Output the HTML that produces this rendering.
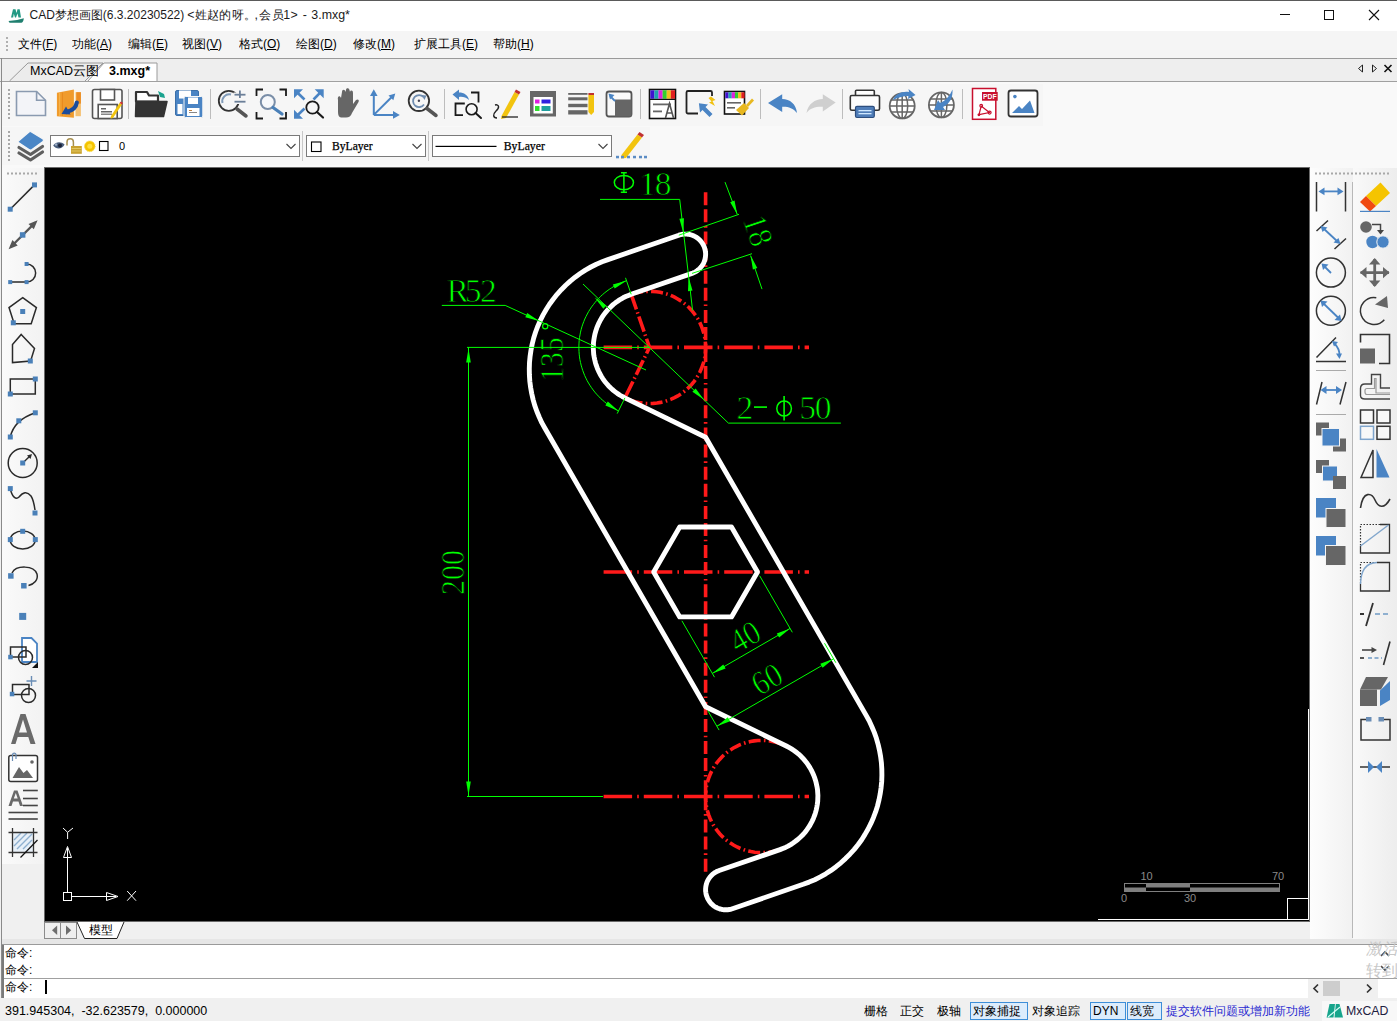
<!DOCTYPE html><html><head><meta charset="utf-8"><style>
*{margin:0;padding:0;box-sizing:border-box}
html,body{width:1397px;height:1021px;overflow:hidden;background:#f0f0f0;font-family:"Liberation Sans",sans-serif;position:relative}
.a{position:absolute}
.t{position:absolute;white-space:nowrap;font-size:12px;color:#000;line-height:14px}
.c{display:inline-block;width:1em;text-align:center;overflow:hidden;vertical-align:top}
</style></head><body>
<div class="a" style="left:0;top:0;width:1397px;height:1px;background:#5a5a5a"></div>
<div class="a" style="left:0;top:1px;width:1397px;height:30px;background:#ffffff"></div>
<div class="t" style="left:29.5px;top:8px;font-size:12px;color:#1a1a1a">CAD<span class="c">梦</span><span class="c">想</span><span class="c">画</span><span class="c">图</span>(6.3.20230522)</div>
<div class="t" style="left:187.2px;top:8px;font-size:12.4px;color:#1a1a1a">&lt;</div>
<div class="t" style="left:194.5px;top:8px;font-size:12.4px;color:#1a1a1a"><span class="c">姓</span><span class="c">赵</span><span class="c">的</span><span class="c">呀</span><span class="c">。</span></div>
<div class="t" style="left:254.5px;top:8px;font-size:12.4px;color:#1a1a1a">,</div>
<div class="t" style="left:259px;top:8px;font-size:12.4px;color:#1a1a1a"><span class="c">会</span><span class="c">员</span></div>
<div class="t" style="left:283.2px;top:8px;font-size:12.4px;color:#1a1a1a">1</div>
<div class="t" style="left:290.5px;top:8px;font-size:12.4px;color:#1a1a1a">&gt;</div>
<div class="t" style="left:302.8px;top:8px;font-size:12.4px;color:#1a1a1a">-</div>
<div class="t" style="left:311.3px;top:8px;font-size:12.4px;color:#1a1a1a">3.mxg*</div>
<div class="a" style="left:0;top:31px;width:1397px;height:27px;background:#f5f5f5"></div>
<div class="t" style="left:18px;top:37px;font-size:12px"><span class="c">文</span><span class="c">件</span>(<u style="text-underline-offset:1px">F</u>)</div>
<div class="t" style="left:72px;top:37px;font-size:12px"><span class="c">功</span><span class="c">能</span>(<u style="text-underline-offset:1px">A</u>)</div>
<div class="t" style="left:128px;top:37px;font-size:12px"><span class="c">编</span><span class="c">辑</span>(<u style="text-underline-offset:1px">E</u>)</div>
<div class="t" style="left:182px;top:37px;font-size:12px"><span class="c">视</span><span class="c">图</span>(<u style="text-underline-offset:1px">V</u>)</div>
<div class="t" style="left:239px;top:37px;font-size:12px"><span class="c">格</span><span class="c">式</span>(<u style="text-underline-offset:1px">O</u>)</div>
<div class="t" style="left:296px;top:37px;font-size:12px"><span class="c">绘</span><span class="c">图</span>(<u style="text-underline-offset:1px">D</u>)</div>
<div class="t" style="left:353px;top:37px;font-size:12px"><span class="c">修</span><span class="c">改</span>(<u style="text-underline-offset:1px">M</u>)</div>
<div class="t" style="left:414px;top:37px;font-size:12px"><span class="c">扩</span><span class="c">展</span><span class="c">工</span><span class="c">具</span>(<u style="text-underline-offset:1px">E</u>)</div>
<div class="t" style="left:493px;top:37px;font-size:12px"><span class="c">帮</span><span class="c">助</span>(<u style="text-underline-offset:1px">H</u>)</div>
<div class="a" style="left:0;top:58px;width:1397px;height:1px;background:#9a9a9a"></div>
<div class="a" style="left:0;top:59px;width:1397px;height:22px;background:#eeeeee"></div>
<div class="a" style="left:0;top:81px;width:1397px;height:1px;background:#a0a0a0"></div>
<div class="a" style="left:2px;top:82px;width:1395px;height:86px;background:#f9f9f9"></div>
<div class="a" style="left:2px;top:84px;width:1041px;height:42px;background:#f6f6f6"></div>
<div class="a" style="left:2px;top:127px;width:648px;height:38px;background:#f6f6f6"></div>
<div class="a" style="left:1px;top:58px;width:1px;height:940px;background:#8a8a8a"></div>
<div class="a" style="left:44px;top:167px;width:1266px;height:755px;background:#000;border:1px solid #6a6a6a"></div>
<div class="a" style="left:2px;top:168px;width:42px;height:696px;background:linear-gradient(to right,#fafafa,#f2f2f2)"></div>
<div class="a" style="left:1310px;top:168px;width:43px;height:772px;background:linear-gradient(to right,#fdfdfd,#f1f1f1)"></div>
<div class="a" style="left:1353px;top:168px;width:44px;height:772px;background:linear-gradient(to right,#f9f9f9,#ededed)"></div>
<div class="a" style="left:2px;top:922px;width:1308px;height:17px;background:#f0f0f0"></div>
<div class="a" style="left:44px;top:922px;width:17px;height:17px;border:1px solid #8c8c8c;background:#efefef"></div>
<div class="a" style="left:60px;top:922px;width:17px;height:17px;border:1px solid #8c8c8c;background:#efefef"></div>
<div class="a" style="left:2px;top:939px;width:1395px;height:6px;background:#e6e6e6"></div>
<div class="a" style="left:2px;top:944px;width:1395px;height:1px;background:#9a9a9a"></div>
<div class="a" style="left:2px;top:945px;width:1395px;height:53px;background:#ffffff;border-left:2px solid #7a7a7a"></div>
<div class="a" style="left:4px;top:978px;width:1393px;height:1px;background:#a0a0a0"></div>
<div class="t" style="left:5px;top:946px;font-size:12px"><span class="c">命</span><span class="c">令</span>:</div>
<div class="t" style="left:5px;top:963px;font-size:12px"><span class="c">命</span><span class="c">令</span>:</div>
<div class="t" style="left:5px;top:980px;font-size:12px"><span class="c">命</span><span class="c">令</span>:</div>
<div class="a" style="left:45px;top:980px;width:2px;height:14px;background:#000"></div>
<div class="a" style="left:0;top:998px;width:1397px;height:23px;background:#f0f0f0"></div>
<div class="t" style="left:5px;top:1004px;font-size:12.5px">391.945304,&nbsp;&nbsp;-32.623579,&nbsp;&nbsp;0.000000</div>
<svg width="1397" height="1021" style="position:absolute;left:0;top:0"><rect x="8" y="89" width="2" height="2" fill="#a8a8a8"/><rect x="8" y="93" width="2" height="2" fill="#a8a8a8"/><rect x="8" y="97" width="2" height="2" fill="#a8a8a8"/><rect x="8" y="101" width="2" height="2" fill="#a8a8a8"/><rect x="8" y="105" width="2" height="2" fill="#a8a8a8"/><rect x="8" y="109" width="2" height="2" fill="#a8a8a8"/><rect x="8" y="113" width="2" height="2" fill="#a8a8a8"/><rect x="8" y="117" width="2" height="2" fill="#a8a8a8"/><rect x="128.0" y="89" width="1" height="30" fill="#bdbdbd"/><rect x="210.0" y="89" width="1" height="30" fill="#bdbdbd"/><rect x="444.0" y="89" width="1" height="30" fill="#bdbdbd"/><rect x="640.0" y="89" width="1" height="30" fill="#bdbdbd"/><rect x="760.0" y="89" width="1" height="30" fill="#bdbdbd"/><rect x="842.0" y="89" width="1" height="30" fill="#bdbdbd"/><rect x="962.0" y="89" width="1" height="30" fill="#bdbdbd"/><path d="M16.5,91.5 H36.6 L45.5,100.3 V115.5 H16.5 Z" fill="#f3f4f8" stroke="#8a9ab0" stroke-width="1.6"/><path d="M36.6,91.5 V100.3 H45.5" fill="none" stroke="#8a9ab0" stroke-width="1.6"/><polygon points="56.9,92.7 73.9,89.4 73.9,117.7 56.9,116.3" fill="#f09b2c"/><rect x="59" y="93" width="1.2" height="23" fill="#f6b24a"/><rect x="62" y="92.5" width="1" height="23.5" fill="#e88a1e"/><rect x="75.3" y="92.2" width="5.6" height="24" fill="#f5c070"/><rect x="76.3" y="92.2" width="4.6" height="11.4" fill="#ec8c22"/><rect x="74" y="90" width="1.3" height="27.5" fill="#fff3dc"/><path d="M76.8,102.5 C76,108 71,111 66.5,112" fill="none" stroke="#1b4c9c" stroke-width="4.2" stroke-linecap="round"/><polygon points="61.5,114 66,106.5 70.5,114.5" fill="#1b4c9c"/><rect x="92.5" y="89.5" width="29.5" height="29" rx="2" fill="#fbfbfb" stroke="#555" stroke-width="1.6"/><rect x="100.5" y="89.5" width="14" height="10.5" fill="#fff" stroke="#555" stroke-width="1.6"/><rect x="98.2" y="104.5" width="19" height="14" fill="#fff" stroke="#555" stroke-width="1.6"/><rect x="101" y="108" width="5" height="1.5" fill="#666"/><rect x="101" y="111" width="11" height="1.5" fill="#666"/><rect x="101" y="113.5" width="11" height="1.5" fill="#888"/><path d="M119.5,103 L122,104.5 L113,118 L110.5,118.5 L111,116 Z" fill="#f2c40f"/><path d="M119.5,103 L121,101.5 L123,103 L122,104.5 Z" fill="#d03030"/><path d="M136,92 H147 L149,95.5 H158 V101.5 H136 Z" fill="#fff" stroke="#333" stroke-width="2.2" stroke-linejoin="round"/><path d="M136,101.5 H167 L163.5,116.5 H135.5 Z" fill="#333" stroke="#333" stroke-width="1.5" stroke-linejoin="round"/><path d="M158,91 L164,94 L165,98 L160,97 Z" fill="#1aa38f"/><rect x="175.5" y="90.5" width="23" height="25" rx="1.5" fill="#4a84c4" stroke="#3a6ea8" stroke-width="1"/><rect x="179" y="90.5" width="12" height="8" fill="#fff"/><rect x="177.5" y="104" width="5" height="10" fill="#fff"/><rect x="184" y="96.5" width="18.8" height="21" rx="1.5" fill="#4a84c4" stroke="#f6f6f6" stroke-width="1"/><rect x="188" y="97.5" width="10" height="6.5" fill="#fff"/><rect x="187" y="108" width="12.5" height="8" fill="#fff"/><rect x="189" y="110" width="3" height="1" fill="#c08040"/><rect x="189" y="112" width="8" height="1" fill="#888"/><circle cx="228.8" cy="100.8" r="10" fill="none" stroke="#333" stroke-width="1.8"/><path d="M222.5,103 A7,7 0 0 1 231,94.5" fill="none" stroke="#7f9ab8" stroke-width="2"/><rect x="233.5" y="92.5" width="13" height="11.5" fill="#f6f6f6"/><rect x="234.5" y="93.8" width="11" height="1.8" fill="#6b7f98"/><rect x="234.5" y="100.8" width="11" height="1.8" fill="#6b7f98"/><rect x="239" y="90.5" width="1.8" height="7.5" fill="#6b7f98"/><line x1="237" y1="109" x2="246" y2="116" stroke="#555" stroke-width="3.5" stroke-linecap="round"/><path d="M256.5,96 V89.5 H263 M279.5,89.5 H286 V96 M286,112 V118.5 H279.5 M263,118.5 H256.5 V112" fill="none" stroke="#1a1a1a" stroke-width="1.8"/><circle cx="267.8" cy="102" r="7" fill="#f6f8fb" stroke="#7a8ea8" stroke-width="2"/><line x1="273" y1="107.5" x2="282" y2="114" stroke="#4a80b8" stroke-width="3.2" stroke-linecap="round"/><polygon points="294,89.2 303,89.2 294,98.2" fill="#4a84c4"/><line x1="297" y1="92.2" x2="304.5" y2="99.5" stroke="#4a84c4" stroke-width="2.6"/><polygon points="323.7,89.2 314.7,89.2 323.7,98.2" fill="#4a84c4"/><line x1="320.7" y1="92.2" x2="313.5" y2="99.5" stroke="#4a84c4" stroke-width="2.6"/><polygon points="294,118.8 303,118.8 294,109.8" fill="#4a84c4"/><line x1="297" y1="115.8" x2="304.5" y2="108.5" stroke="#4a84c4" stroke-width="2.6"/><circle cx="312.5" cy="107.5" r="6.2" fill="none" stroke="#1a1a1a" stroke-width="1.8"/><line x1="317" y1="112" x2="323" y2="117.5" stroke="#1a1a1a" stroke-width="2.2" stroke-linecap="round"/><path d="M338,100 C337,96 340,95 341,98 L342,92 C342,89 345,89 345.5,92 L346,90 C346,87.5 349,87.5 349.5,90 L350,92 C350.5,90 353,90 353,93 L353,104 L356,100 C358,98.5 359.5,100 358.5,102 L352,113 C351,116 349,117.5 346,117.5 L341,117.5 C339,117.5 338,115 338,112 Z" fill="#666"/><path d="M373.8,114.9 V94 M373.8,114.9 H395 M373.8,114.9 L391.5,97.2" fill="none" stroke="#4a84c4" stroke-width="2"/><polygon points="373.8,89.2 370,96 377.6,96" fill="#4a84c4"/><polygon points="399.8,114.9 393,111 393,118.8" fill="#4a84c4"/><polygon points="395.3,93.5 388.5,95.5 393.3,100.3" fill="#4a84c4"/><circle cx="418.9" cy="100.8" r="10.2" fill="none" stroke="#333" stroke-width="1.8"/><path d="M423.5,97 A6,6 0 1 0 424,104.5" fill="none" stroke="#6f8db0" stroke-width="1.8"/><polygon points="421.5,95 426.5,95.5 424.5,100" fill="#6f8db0"/><circle cx="418.9" cy="100.8" r="1.2" fill="#445"/><line x1="427" y1="108.5" x2="436" y2="115.5" stroke="#555" stroke-width="3.5" stroke-linecap="round"/><path d="M452.5,94.5 L459,89.5 V92.5 C464,92.5 468,95 469,100 C466,97 462,96.5 459,97 V100 Z" fill="#4a84c4"/><path d="M471,92.5 H478.5 V102.5 M464.8,103.5 H455.5 V115.2 H463" fill="none" stroke="#1a1a1a" stroke-width="1.8"/><circle cx="471.6" cy="109.3" r="5.5" fill="none" stroke="#1a1a1a" stroke-width="1.6"/><line x1="475.5" y1="113" x2="481" y2="118" stroke="#1a1a1a" stroke-width="2" stroke-linecap="round"/><path d="M501.5,116 L514.5,92 L519,94.5 L506,118 L501,119 Z" fill="#f2c40f"/><path d="M514.5,92 L516,89.5 L520.5,92 L519,94.5 Z" fill="#c03030"/><path d="M495,105 C499,104 500,107.5 496,111 C493,114 492.5,118 497,118" fill="none" stroke="#222" stroke-width="1.4"/><line x1="502" y1="117" x2="518" y2="117" stroke="#333" stroke-width="1.4"/><rect x="530" y="91" width="26" height="25.5" fill="#676767"/><rect x="533.5" y="97" width="19.3" height="16.5" fill="#fff"/><rect x="535" y="99.5" width="4.5" height="4" fill="#e020e0"/><rect x="541.5" y="99.5" width="9" height="4" fill="#3020e0"/><rect x="535" y="106" width="4.5" height="5" fill="#30e030"/><rect x="541.5" y="106" width="9" height="5" fill="#20a0a0"/><rect x="568.2" y="93" width="19.3" height="1.8" fill="#666"/><rect x="568.2" y="97.3" width="19.3" height="3" fill="#666"/><rect x="568.2" y="103.8" width="19.3" height="3.4" fill="#666"/><rect x="568.2" y="110.2" width="19.3" height="4.3" fill="#666"/><path d="M588.4,95 H594 V112 L591.2,115 L588.4,112 Z" fill="#f2c40f"/><rect x="588.4" y="93" width="5.6" height="2" fill="#c03030"/><rect x="606.5" y="91.5" width="25" height="25" rx="2.5" fill="#fafafa" stroke="#555" stroke-width="1.8"/><rect x="615" y="99.5" width="16.5" height="17" fill="#666"/><line x1="615" y1="101" x2="610" y2="96" stroke="#4a84c4" stroke-width="1.8"/><polygon points="608.5,93.5 614.5,95 610,99.5" fill="#4a84c4"/><rect x="649.5" y="89.5" width="26" height="29" fill="#fff" stroke="#111" stroke-width="1.6"/><rect x="650.3" y="90.3" width="4.2" height="8.5" fill="#4010d0"/><rect x="654.4" y="90.3" width="4.2" height="8.5" fill="#20a0b0"/><rect x="658.5" y="90.3" width="4.2" height="8.5" fill="#e020e0"/><rect x="662.6" y="90.3" width="4.2" height="8.5" fill="#30d030"/><rect x="666.7" y="90.3" width="4.2" height="8.5" fill="#f0c020"/><rect x="670.8" y="90.3" width="4.2" height="8.5" fill="#e02020"/><rect x="650" y="98.8" width="25" height="1.2" fill="#111"/><rect x="653" y="103.5" width="18" height="1.8" fill="#666"/><rect x="653" y="110.5" width="9" height="1.8" fill="#666"/><path d="M665.5,118 L669.5,103.5 L673.5,118 M667,113 H672" fill="none" stroke="#555" stroke-width="1.6"/><path d="M698,113.5 H688 A1.5,1.5 0 0 1 686.5,112 V92.5 A1.5,1.5 0 0 1 688,91 H710.5 A1.5,1.5 0 0 1 712,92.5 V96" fill="none" stroke="#222" stroke-width="1.8"/><polygon points="698.9,103.3 708,104.5 705.5,107 712.5,114 709.5,117 702.5,110 700,112.5" fill="#4a84c4"/><polygon points="711,96.5 715.5,100 712.5,101 715,106 709,102.5 711.5,101.5 708.5,98" fill="#f0c010"/><rect x="724.5" y="91.5" width="20" height="22.5" fill="#fff" stroke="#111" stroke-width="1.6"/><rect x="725.3" y="92.3" width="3.3" height="6" fill="#4010d0"/><rect x="728.5" y="92.3" width="3.3" height="6" fill="#20a0b0"/><rect x="731.7" y="92.3" width="3.3" height="6" fill="#e020e0"/><rect x="734.9" y="92.3" width="3.3" height="6" fill="#30d030"/><rect x="738.1" y="92.3" width="3.3" height="6" fill="#f0c020"/><rect x="741.3" y="92.3" width="3.3" height="6" fill="#e02020"/><rect x="727" y="102" width="14" height="1.6" fill="#666"/><rect x="727" y="107" width="8" height="1.6" fill="#666"/><path d="M736,110 L744,103 L749,108 L742,115.5 Z" fill="#e8b820"/><path d="M746,105 L752,98.5 L754,100.5 L748,107 Z" fill="#e8b820"/><path d="M768,102.9 L782.2,94.3 V99 C790,99 796,104 797,113 C793,108 788,106.5 782.2,106.8 V112 Z" fill="#4a84c4"/><path d="M835.7,102.5 L822.8,94.3 V99 C815,99 808,104 806.5,113 C810,108 816,106.5 822.8,106.8 V111.5 Z" fill="#cfcfcf"/><rect x="855.5" y="90.2" width="18.8" height="6" rx="1" fill="#fff" stroke="#333" stroke-width="1.6"/><rect x="850.3" y="95.5" width="29.2" height="14.7" rx="1.5" fill="#fdfdfd" stroke="#333" stroke-width="1.6"/><rect x="855.5" y="106.3" width="18.8" height="11.2" rx="1.5" fill="#4f7db8" stroke="#2d4e7e" stroke-width="1.2"/><rect x="858.5" y="110" width="13" height="1.3" fill="#cfe8ff"/><rect x="858.5" y="113" width="13" height="1.3" fill="#cfe8ff"/><circle cx="902.2" cy="105.9" r="12.5" fill="#fff" stroke="#666" stroke-width="1.8"/><ellipse cx="902.2" cy="105.9" rx="5.5" ry="12.5" fill="none" stroke="#666" stroke-width="1.5"/><path d="M902.2,93.4 V118.4 M889.7,105.9 H914.7 M891.2,99.9 H913.2 M891.2,111.9 H913.2" fill="none" stroke="#666" stroke-width="1.5"/><circle cx="941.4" cy="104.9" r="12.5" fill="#fff" stroke="#666" stroke-width="1.8"/><ellipse cx="941.4" cy="104.9" rx="5.5" ry="12.5" fill="none" stroke="#666" stroke-width="1.5"/><path d="M941.4,92.4 V117.4 M928.9,104.9 H953.9 M930.4,98.9 H952.4 M930.4,110.9 H952.4" fill="none" stroke="#666" stroke-width="1.5"/><path d="M893,100 C895,94 902,91 909,92 L908.5,89 L915.5,95 L908,99 L908.5,96 C903,96 897,98 893,100 Z" fill="#4a84c4"/><path d="M952.5,89.5 C953,97 950,104 943,107 L945,110 L934,110 L938,100 L940,103 C946,101 950,95 952.5,89.5 Z" fill="#4a84c4"/><rect x="972.5" y="88.5" width="23.3" height="30.8" fill="#fff" stroke="#c8102e" stroke-width="1.5"/><rect x="982" y="92" width="15.7" height="8.7" fill="#c8102e"/><text x="989.8" y="99.2" font-family="Liberation Sans" font-weight="bold" font-size="7.5" fill="#fff" text-anchor="middle" textLength="13.5" lengthAdjust="spacingAndGlyphs">PDF</text><path d="M979,114.7 L981.2,106 L989.4,112.5 Z" fill="none" stroke="#c8102e" stroke-width="1.2"/><circle cx="981.2" cy="105.8" r="1.4" fill="none" stroke="#c8102e" stroke-width="1.1"/><circle cx="978.9" cy="114.8" r="1.4" fill="#c8102e"/><circle cx="989.6" cy="112.6" r="1.5" fill="none" stroke="#c8102e" stroke-width="1.2"/><rect x="1008.5" y="90.5" width="29" height="26" rx="2.5" fill="#fff" stroke="#333" stroke-width="1.8"/><circle cx="1014.9" cy="96.6" r="1.8" fill="#4a84c4"/><polygon points="1012,113 1019,106 1022,109 1030,100.5 1034.5,113" fill="#4a84c4"/><rect x="8" y="131" width="2" height="2" fill="#a8a8a8"/><rect x="8" y="135" width="2" height="2" fill="#a8a8a8"/><rect x="8" y="139" width="2" height="2" fill="#a8a8a8"/><rect x="8" y="143" width="2" height="2" fill="#a8a8a8"/><rect x="8" y="147" width="2" height="2" fill="#a8a8a8"/><rect x="8" y="151" width="2" height="2" fill="#a8a8a8"/><rect x="8" y="155" width="2" height="2" fill="#a8a8a8"/><rect x="8" y="159" width="2" height="2" fill="#a8a8a8"/><polyline points="19,147.5 30.5,154.5 42.5,146.5" fill="none" stroke="#5f5f5f" stroke-width="3.2" stroke-linecap="round" stroke-linejoin="round"/><polyline points="19,153 30.5,160 42.5,152" fill="none" stroke="#5f5f5f" stroke-width="3.2" stroke-linecap="round" stroke-linejoin="round"/><path d="M18.5,141 L29,132 Q30,131 31.5,132 L43,139 Q44,140 43,141.5 L32,149.5 Q30.5,150.5 29,149.5 L18.5,142.5 Q17.5,141.8 18.5,141 Z" fill="#4a86c6" stroke="#f6f6f6" stroke-width="1.2"/><rect x="50.5" y="135.5" width="249" height="21" fill="#fff" stroke="#7a7a7a" stroke-width="1"/><path d="M53.2,145.5 C56,141.5 61,141.5 64.6,144.5 C62,149.5 56,149.5 53.2,145.5 Z" fill="#4a5e7c"/><circle cx="60" cy="145.5" r="2" fill="#1a2238"/><circle cx="56" cy="144.5" r="1.2" fill="#9fb0c8"/><path d="M67,145.5 V142 A3.2,3.2 0 0 1 73.4,142 V146" fill="none" stroke="#a89050" stroke-width="1.5"/><rect x="71" y="146" width="10.8" height="7.8" fill="#c9a230"/><path d="M71.5,148.5 H81.5 M71.5,151 H81.5" stroke="#e8d070" stroke-width="0.8"/><circle cx="89.8" cy="146.3" r="5.3" fill="#f5c400" stroke="#f8d840" stroke-width="1" stroke-dasharray="1.2 0.8"/><circle cx="89.8" cy="146.3" r="2.5" fill="#ffe040"/><rect x="99.5" y="141.5" width="8.5" height="9" fill="#fff" stroke="#000" stroke-width="1.1"/><text x="119" y="150" font-family="Liberation Sans" font-size="11" fill="#000">0</text><path d="M286.5,144 L291,148.5 L295.5,144" fill="none" stroke="#444" stroke-width="1.1"/><rect x="302" y="131" width="1" height="30" fill="#c8c8c8"/><rect x="428" y="131" width="1" height="30" fill="#c8c8c8"/><rect x="306.5" y="135.5" width="119" height="21" fill="#fff" stroke="#7a7a7a" stroke-width="1"/><rect x="311.5" y="142" width="9.5" height="9.5" fill="#fff" stroke="#000" stroke-width="1.1"/><text x="332" y="150" font-family="Liberation Serif" font-size="11.5" stroke="#000" stroke-width="0.25" textLength="40.6" lengthAdjust="spacingAndGlyphs" fill="#000">ByLayer</text><path d="M412.5,144 L417,148.5 L421.5,144" fill="none" stroke="#444" stroke-width="1.1"/><rect x="432.5" y="135.5" width="179" height="21" fill="#fff" stroke="#7a7a7a" stroke-width="1"/><rect x="435.5" y="145.8" width="61" height="1.2" fill="#000"/><text x="503.8" y="150" font-family="Liberation Serif" font-size="11.5" stroke="#000" stroke-width="0.25" textLength="41" lengthAdjust="spacingAndGlyphs" fill="#000">ByLayer</text><path d="M598.5,144 L603,148.5 L607.5,144" fill="none" stroke="#444" stroke-width="1.1"/><path d="M621.5,155 L637.5,134.5 L642,137.5 L626,158 L621,158.5 Z" fill="#f2c40f"/><path d="M637.5,134.5 L639.5,132 L644,135 L642,137.5 Z" fill="#c03030"/><rect x="616" y="155.8" width="3" height="2.5" fill="#5b8cc4"/><rect x="621" y="155.8" width="3" height="2.5" fill="#5b8cc4"/><rect x="627" y="155.8" width="3" height="2.5" fill="#5b8cc4"/><rect x="633" y="155.8" width="3" height="2.5" fill="#5b8cc4"/><rect x="639" y="155.8" width="3" height="2.5" fill="#5b8cc4"/><rect x="644" y="155.8" width="3" height="2.5" fill="#5b8cc4"/><rect x="7" y="172.5" width="2" height="2" fill="#a8a8a8"/><rect x="11" y="172.5" width="2" height="2" fill="#a8a8a8"/><rect x="15" y="172.5" width="2" height="2" fill="#a8a8a8"/><rect x="19" y="172.5" width="2" height="2" fill="#a8a8a8"/><rect x="23" y="172.5" width="2" height="2" fill="#a8a8a8"/><rect x="27" y="172.5" width="2" height="2" fill="#a8a8a8"/><rect x="31" y="172.5" width="2" height="2" fill="#a8a8a8"/><rect x="35" y="172.5" width="2" height="2" fill="#a8a8a8"/><line x1="10.2" y1="209.2" x2="34.5" y2="184.9" stroke="#2a2a2a" stroke-width="1.5"/><rect x="32.0" y="182.4" width="5" height="5" fill="#4a80b8"/><rect x="7.7" y="206.7" width="5" height="5" fill="#4a80b8"/><line x1="11" y1="246.8" x2="35.2" y2="222.6" stroke="#555" stroke-width="2.2"/><polygon points="37.6,220.2 28.5,224 33.8,229.3" fill="#555"/><polygon points="8.6,249.2 17.7,245.4 12.4,240.1" fill="#555"/><rect x="19.9" y="232.2" width="5.5" height="5.5" fill="#4a80b8"/><path d="M10.2,282.1 H26.6 A9,9 0 0 0 26.6,264" fill="none" stroke="#2a2a2a" stroke-width="1.5"/><rect x="8.2" y="280.1" width="4" height="4" fill="#4a80b8"/><rect x="24.6" y="280.1" width="4" height="4" fill="#4a80b8"/><rect x="24.6" y="262.0" width="4" height="4" fill="#4a80b8"/><polygon points="22.7,297.7 36.4,307.6 31.2,323.7 14.2,323.7 9,307.6" fill="none" stroke="#2a2a2a" stroke-width="1.5"/><rect x="20.2" y="309.0" width="5" height="5" fill="#4a80b8"/><rect x="10.8" y="320.3" width="5" height="5" fill="#4a80b8"/><polygon points="21.2,334.4 34.5,348.5 30.6,361 12.5,362.6 12.5,344.6" fill="none" stroke="#2a2a2a" stroke-width="1.5"/><rect x="27.8" y="358.5" width="5" height="5" fill="#4a80b8"/><rect x="10.3" y="379" width="25" height="15" fill="none" stroke="#2a2a2a" stroke-width="1.5"/><rect x="32.8" y="376.5" width="5" height="5" fill="#4a80b8"/><rect x="7.8" y="391.5" width="5" height="5" fill="#4a80b8"/><path d="M10.3,437 Q14,420 35.3,412.8" fill="none" stroke="#2a2a2a" stroke-width="1.5"/><rect x="32.8" y="410.3" width="5" height="5" fill="#4a80b8"/><rect x="16.3" y="418.3" width="5" height="5" fill="#4a80b8"/><rect x="7.8" y="434.5" width="5" height="5" fill="#4a80b8"/><circle cx="22.7" cy="463" r="14.5" fill="none" stroke="#2a2a2a" stroke-width="1.5"/><line x1="22.7" y1="463" x2="30" y2="456" stroke="#2a2a2a" stroke-width="1.4"/><polygon points="32,454 27,455.5 30.5,459" fill="#2a2a2a"/><rect x="20.2" y="460.5" width="5" height="5" fill="#4a80b8"/><path d="M10.3,488.6 C12,497 16,500 19,497 C23,492 27,491 31,496 C33,499 34,503 35,510" fill="none" stroke="#2a2a2a" stroke-width="1.5"/><rect x="7.8" y="486.1" width="5" height="5" fill="#4a80b8"/><rect x="32.5" y="510.5" width="5" height="5" fill="#4a80b8"/><ellipse cx="22.7" cy="540" rx="12.5" ry="9" fill="none" stroke="#2a2a2a" stroke-width="1.5"/><rect x="20.2" y="528.8" width="5" height="5" fill="#4a80b8"/><rect x="7.8" y="537.1" width="5" height="5" fill="#4a80b8"/><rect x="32.8" y="537.1" width="5" height="5" fill="#4a80b8"/><path d="M12,573 C16,565 34,565 37,574 C38.5,580 34,584 28.5,585.5" fill="none" stroke="#2a2a2a" stroke-width="1.5"/><rect x="8.1" y="573.2" width="5.5" height="5.5" fill="#4a80b8"/><rect x="21.1" y="583.0" width="5.5" height="5.5" fill="#4a80b8"/><rect x="19.2" y="612.9" width="7" height="7" fill="#4a80b8"/><path d="M22,638 H31.5 L37,643.5 V662 H22 Z" fill="#fff" stroke="#4a84c4" stroke-width="1.8"/><rect x="10.5" y="647" width="15.5" height="10" fill="none" stroke="#2a2a2a" stroke-width="1.5"/><circle cx="25.5" cy="657.5" r="7" fill="none" stroke="#2a2a2a" stroke-width="1.5"/><rect x="8.2" y="654.8" width="4.5" height="4.5" fill="#4a80b8"/><polygon points="38,662 38,668 32,668" fill="#111"/><rect x="12.5" y="684.5" width="16.5" height="10" fill="none" stroke="#2a2a2a" stroke-width="1.5"/><circle cx="28.5" cy="695.5" r="7" fill="none" stroke="#2a2a2a" stroke-width="1.5"/><rect x="9.8" y="691.8" width="4.5" height="4.5" fill="#4a80b8"/><path d="M31.5,676 V686 M26.5,681 H36.5" stroke="#6a8db5" stroke-width="1.4"/><path d="M11,744 L20.5,714 H25.5 L35.5,744 H30.5 L28.3,737 H17.7 L15.5,744 Z M19,732.5 H27 L23,719.5 Z" fill="#6a6a6a" fill-rule="evenodd"/><rect x="8.8" y="755.5" width="28.7" height="26" rx="2" fill="#fff" stroke="#333" stroke-width="1.5"/><polygon points="12.5,778 19,767 23.5,773 27,770 33,778" fill="#666"/><circle cx="32" cy="762" r="1.8" fill="#666"/><path d="M12.5,761 V754.5 A1.8,1.8 0 0 1 16,754.5 V759" fill="none" stroke="#6a8db5" stroke-width="1.2"/><path d="M8.5,806 L14,790.5 H17.5 L23,806 H20 L18.5,801.5 H13 L11.5,806 Z M13.8,798.5 H17.7 L15.8,793 Z" fill="#6a6a6a" fill-rule="evenodd"/><rect x="23" y="789.7" width="14.799999999999997" height="1.6" fill="#444"/><rect x="23" y="797.7" width="14.799999999999997" height="1.6" fill="#444"/><rect x="23" y="804.7" width="14.799999999999997" height="1.6" fill="#444"/><rect x="8.5" y="811.7" width="29.299999999999997" height="1.6" fill="#444"/><rect x="8.5" y="818.2" width="29.299999999999997" height="1.6" fill="#444"/><rect x="13" y="832.5" width="20" height="20" fill="#e8f0f8"/><path d="M14,840 L21,833 M14,846 L27,833 M17,849 L32,834 M23,849 L32,840" stroke="#8fb0d0" stroke-width="1.4"/><path d="M8.5,832.5 H37.5 M8.5,852.5 H37.5 M12.5,828 V857 M33.5,828 V857" stroke="#333" stroke-width="1.3"/><line x1="20.5" y1="857.5" x2="37.5" y2="840" stroke="#111" stroke-width="1.2"/><rect x="1315" y="172.5" width="2" height="2" fill="#a8a8a8"/><rect x="1319" y="172.5" width="2" height="2" fill="#a8a8a8"/><rect x="1323" y="172.5" width="2" height="2" fill="#a8a8a8"/><rect x="1327" y="172.5" width="2" height="2" fill="#a8a8a8"/><rect x="1331" y="172.5" width="2" height="2" fill="#a8a8a8"/><rect x="1335" y="172.5" width="2" height="2" fill="#a8a8a8"/><rect x="1339" y="172.5" width="2" height="2" fill="#a8a8a8"/><rect x="1343" y="172.5" width="2" height="2" fill="#a8a8a8"/><rect x="1347" y="172.5" width="2" height="2" fill="#a8a8a8"/><rect x="1351" y="172.5" width="2" height="2" fill="#a8a8a8"/><rect x="1355" y="172.5" width="2" height="2" fill="#a8a8a8"/><rect x="1359" y="172.5" width="2" height="2" fill="#a8a8a8"/><rect x="1363" y="172.5" width="2" height="2" fill="#a8a8a8"/><rect x="1367" y="172.5" width="2" height="2" fill="#a8a8a8"/><rect x="1371" y="172.5" width="2" height="2" fill="#a8a8a8"/><rect x="1375" y="172.5" width="2" height="2" fill="#a8a8a8"/><rect x="1379" y="172.5" width="2" height="2" fill="#a8a8a8"/><rect x="1383" y="172.5" width="2" height="2" fill="#a8a8a8"/><rect x="1387" y="172.5" width="2" height="2" fill="#a8a8a8"/><rect x="1352" y="182" width="1" height="756" fill="#b8b8b8"/><path d="M1316.5,182 V211.5 M1345.5,182 V211.5" stroke="#333" stroke-width="1.5"/><line x1="1322" y1="191.4" x2="1340" y2="191.4" stroke="#4a84c4" stroke-width="1.8"/><polygon points="1318.5,191.4 1324.5,187.5 1324.5,195.3" fill="#4a84c4"/><polygon points="1343.5,191.4 1337.5,187.5 1337.5,195.3" fill="#4a84c4"/><path d="M1316.5,231 L1328,220.5 M1334.5,249 L1346,238.5" stroke="#333" stroke-width="1.5"/><line x1="1323" y1="228" x2="1338" y2="242" stroke="#4a84c4" stroke-width="1.8"/><polygon points="1320.5,226 1327.5,227.5 1322.5,232" fill="#4a84c4"/><polygon points="1340.5,244 1333.5,242.5 1338.5,238" fill="#4a84c4"/><circle cx="1330.9" cy="272.6" r="14.5" fill="none" stroke="#333" stroke-width="1.5"/><line x1="1331" y1="273" x2="1324" y2="266" stroke="#4a84c4" stroke-width="1.8"/><polygon points="1321.5,263.5 1328.5,264.5 1323,270" fill="#4a84c4"/><circle cx="1330.9" cy="310.8" r="14.5" fill="none" stroke="#333" stroke-width="1.5"/><line x1="1323" y1="303" x2="1339" y2="318.5" stroke="#4a84c4" stroke-width="1.8"/><polygon points="1320.5,300.5 1327.5,301.5 1322,307" fill="#4a84c4"/><polygon points="1341.5,321 1334.5,320 1340,314.5" fill="#4a84c4"/><path d="M1316.5,357.5 L1336,337.5 M1316,361.5 H1346" stroke="#333" stroke-width="1.5"/><path d="M1334,343 Q1340,349 1339.5,356" fill="none" stroke="#4a84c4" stroke-width="1.8"/><polygon points="1332,341 1338,342 1334,346.5" fill="#4a84c4"/><polygon points="1339.5,359 1336,353.5 1342,353.5" fill="#4a84c4"/><rect x="1316" y="370" width="30" height="1" fill="#aaa"/><rect x="1316" y="414" width="30" height="1" fill="#aaa"/><path d="M1316.5,404.5 L1322,382 M1340,404.5 L1346,382" stroke="#333" stroke-width="1.5"/><line x1="1324" y1="390" x2="1338" y2="390" stroke="#4a84c4" stroke-width="1.8"/><polygon points="1320.5,390 1326.5,386 1326.5,394" fill="#4a84c4"/><polygon points="1342,390 1336,386 1336,394" fill="#4a84c4"/><rect x="1316" y="422.5" width="13" height="13" fill="#666"/><rect x="1333" y="438.5" width="13" height="13" fill="#666"/><rect x="1322" y="428.5" width="17.5" height="17.5" fill="#4a84c4" stroke="#f4f4f4" stroke-width="1"/><rect x="1316" y="460" width="13" height="13" fill="#666"/><rect x="1322.5" y="466" width="15" height="15" fill="#4a84c4" stroke="#f4f4f4" stroke-width="1"/><rect x="1333" y="476" width="13" height="13" fill="#666"/><rect x="1316" y="498" width="20" height="19.5" fill="#4a84c4"/><rect x="1326" y="508.5" width="20" height="19" fill="#666" stroke="#f4f4f4" stroke-width="1"/><rect x="1316" y="498" width="20" height="19.5" fill="#4a84c4" opacity="0"/><rect x="1316" y="536" width="20" height="19.5" fill="#4a84c4"/><rect x="1325.5" y="545.5" width="20.5" height="20" fill="#666" stroke="#f4f4f4" stroke-width="1"/><polygon points="1366,196 1380.5,182.5 1390,193 1376,206" fill="#f5c400"/><polygon points="1360,202 1366,196 1376,206 1370,211.5" fill="#f04a10"/><rect x="1360" y="210.8" width="30" height="1.2" fill="#4a84c4"/><circle cx="1366" cy="227" r="5.8" fill="#666"/><path d="M1372,224.5 H1380.5 V232" fill="none" stroke="#444" stroke-width="1.5"/><polygon points="1377,230 1384,230 1380.5,234.5" fill="#444"/><circle cx="1372.5" cy="242" r="6.2" fill="#4a84c4"/><circle cx="1383" cy="242" r="6.2" fill="#4a84c4" stroke="#f4f4f4" stroke-width="1"/><path d="M1374.7,259 V286 M1360.5,272.6 H1389" stroke="#666" stroke-width="2.8"/><polygon points="1374.7,258 1369,264.5 1380.4,264.5" fill="#666"/><polygon points="1374.7,287 1369,280.5 1380.4,280.5" fill="#666"/><polygon points="1360,272.6 1366.5,267 1366.5,278.2" fill="#666"/><polygon points="1389.5,272.6 1383,267 1383,278.2" fill="#666"/><path d="M1376.3,297.7 A13.5,13.5 0 1 0 1384.3,319.7" fill="none" stroke="#333" stroke-width="1.5"/><polygon points="1375,304.5 1387,296 1388,308" fill="#666"/><path d="M1360.5,342.5 V334.5 H1389.5 V363.5 H1379" fill="none" stroke="#333" stroke-width="1.6"/><rect x="1360" y="348.5" width="15" height="15" fill="#666"/><path d="M1390,388 H1380.5 V374.5 H1371.5 V384 H1365 Q1360.5,384 1360.5,388.5 V395.5 Q1360.5,399 1365,399 H1390" fill="none" stroke="#444" stroke-width="1.4"/><path d="M1390,393 H1376 V378.5 H1374.5 V388.5 H1367 Q1365,388.5 1365,390.5 V392 Q1365,394.5 1367,394.5 H1390" fill="none" stroke="#999" stroke-width="1.2"/><rect x="1360.5" y="410" width="13" height="13" fill="#f8f8f8" stroke="#333" stroke-width="1.5"/><rect x="1377" y="410" width="13" height="13" fill="#f8f8f8" stroke="#333" stroke-width="1.5"/><rect x="1360.5" y="426.3" width="13" height="13" fill="#f8f8f8" stroke="#7fa5cc" stroke-width="1.5"/><rect x="1377" y="426.3" width="13" height="13" fill="#f8f8f8" stroke="#333" stroke-width="1.5"/><polygon points="1373,450 1373,477.5 1361,477.5" fill="none" stroke="#333" stroke-width="1.5"/><polygon points="1376.5,449 1389.5,477.5 1376.5,477.5" fill="#4a84c4"/><path d="M1360.5,508 C1363,490 1372,493 1375,500 C1378,507 1384,510 1390,499" fill="none" stroke="#333" stroke-width="1.6"/><path d="M1380,524.5 H1389.5 V553 H1360.5 V546" fill="none" stroke="#333" stroke-width="1.3"/><path d="M1380,524.5 H1360.5 V546" fill="none" stroke="#333" stroke-width="1.2" stroke-dasharray="1.5 1.5"/><line x1="1360.5" y1="546" x2="1388.5" y2="525" stroke="#7fa5cc" stroke-width="1.4"/><path d="M1377,562.5 H1389.5 V591 H1360.5 V584" fill="none" stroke="#333" stroke-width="1.3"/><path d="M1377,562.5 H1360.5 V584" fill="none" stroke="#333" stroke-width="1.2" stroke-dasharray="1.5 1.5"/><path d="M1360.5,584 Q1361,563 1377,562.5" fill="none" stroke="#7fa5cc" stroke-width="1.4"/><path d="M1360,614 H1364 M1366,626 L1373,603" stroke="#333" stroke-width="1.8"/><path d="M1375,614 H1390" stroke="#8fb0d0" stroke-width="1.8" stroke-dasharray="5 3"/><path d="M1362,650 H1375" stroke="#444" stroke-width="1.6"/><polygon points="1377,650 1371.5,647 1371.5,653" fill="#444"/><path d="M1360,658 H1364" stroke="#444" stroke-width="1.8"/><path d="M1368,658 H1382" stroke="#8fb0d0" stroke-width="1.8" stroke-dasharray="4 2.5"/><line x1="1383.5" y1="665" x2="1390" y2="641.5" stroke="#333" stroke-width="1.6"/><polygon points="1360,689.5 1366,677 1388,677 1381,689.5" fill="#666"/><rect x="1360" y="689.5" width="17" height="16.5" fill="#666"/><polygon points="1380,690.5 1390,681 1390,700 1380,706" fill="#4a84c4"/><path d="M1368,719.5 H1361 V740 H1390 V719.5 H1382" fill="none" stroke="#333" stroke-width="1.5"/><rect x="1366" y="717" width="5.5" height="4.5" fill="#6a8db5"/><rect x="1378.5" y="717" width="5.5" height="4.5" fill="#6a8db5"/><path d="M1360,767 H1390" stroke="#333" stroke-width="1.5"/><polygon points="1374,767 1368,761 1368,773" fill="#4a84c4"/><polygon points="1376,767 1382,761 1382,773" fill="#4a84c4"/></svg>
<svg width="1397" height="1021" style="position:absolute;left:0;top:0">
<defs><clipPath id="cv"><rect x="45" y="168" width="1264" height="753"/></clipPath></defs>
<g clip-path="url(#cv)">
<text x="647.5 663.0" y="195.0" font-size="33.5" text-anchor="middle" font-family="Liberation Serif" fill="#00ff00" stroke="#000" stroke-width="0.8">18</text>
<ellipse cx="623.9" cy="182.6" rx="9.6" ry="7.2" fill="none" stroke="#00ff00" stroke-width="1.5"/><path d="M623.9,172.5 V192.4 M621,172.8 H626.8 M620.8,192.2 H627" stroke="#00ff00" stroke-width="1.5"/>
<text x="457.8 473.1 488.4" y="301.5" font-size="33.5" text-anchor="middle" font-family="Liberation Serif" fill="#00ff00" stroke="#000" stroke-width="0.8">R52</text>
<text x="744.9 807.5 823.0" y="418.6" font-size="33.5" text-anchor="middle" font-family="Liberation Serif" fill="#00ff00" stroke="#000" stroke-width="0.8">250</text>
<ellipse cx="784.1" cy="408.5" rx="7.3" ry="7.6" fill="none" stroke="#00ff00" stroke-width="1.5"/><path d="M784.1,396 V420.5" stroke="#00ff00" stroke-width="1.6"/>
<rect x="754" y="406.3" width="13" height="1.6" fill="#00ff00"/>
<text x="464.1" y="572.5" font-size="33.5" text-anchor="middle" textLength="45" lengthAdjust="spacingAndGlyphs" font-family="Liberation Serif" fill="#00ff00" stroke="#000" stroke-width="0.8" transform="rotate(-90 464.1 572.5)">200</text>
<text x="562.7" y="359.5" font-size="33.5" text-anchor="middle" textLength="44.5" lengthAdjust="spacingAndGlyphs" font-family="Liberation Serif" fill="#00ff00" stroke="#000" stroke-width="0.8" transform="rotate(-90 562.7 359.5)">135</text>
<circle cx="545.2" cy="326.2" r="2.6" fill="none" stroke="#00ff00" stroke-width="1.2"/>
<text x="747.6" y="234.1" font-size="33.5" text-anchor="middle" textLength="31" lengthAdjust="spacingAndGlyphs" font-family="Liberation Serif" fill="#00ff00" stroke="#000" stroke-width="0.8" transform="rotate(71 747.6 234.1)">18</text>
<text x="750.4" y="646.2" font-size="33.5" text-anchor="middle" textLength="30" lengthAdjust="spacingAndGlyphs" font-family="Liberation Serif" fill="#00ff00" stroke="#000" stroke-width="0.8" transform="rotate(-30 750.4 646.2)">40</text>
<text x="772.5" y="688.7" font-size="33.5" text-anchor="middle" textLength="30" lengthAdjust="spacingAndGlyphs" font-family="Liberation Serif" fill="#00ff00" stroke="#000" stroke-width="0.8" transform="rotate(-30 772.5 688.7)">60</text>
<line x1="705.6" y1="192.3" x2="705.6" y2="873.5" stroke="#ff1a1a" stroke-width="3.6" stroke-dasharray="13 4 13 3.8 1.6 3.8"/>
<line x1="603.6" y1="347.4" x2="809.0" y2="347.4" stroke="#ff1a1a" stroke-width="3.6" stroke-dasharray="28.5 5.1 1.6 5.0"/>
<line x1="603.6" y1="572.0" x2="809.0" y2="572.0" stroke="#ff1a1a" stroke-width="3.6" stroke-dasharray="28.5 5.1 1.6 5.0"/>
<line x1="603.6" y1="796.5" x2="809.0" y2="796.5" stroke="#ff1a1a" stroke-width="3.6" stroke-dasharray="28.5 5.1 1.6 5.0"/>
<polyline points="631.2,294.3 634.7,293.2 638.3,292.4 641.9,291.8 645.5,291.4 649.2,291.3 652.9,291.4 656.5,291.7 660.2,292.3 663.7,293.1 667.3,294.2 670.7,295.4 674.1,296.9 677.3,298.7 680.4,300.6 683.4,302.7 686.3,305.0 689.0,307.5 691.5,310.2 693.8,313.0 696.0,316.0 698.0,319.1 699.7,322.3 701.2,325.7 702.5,329.1 703.6,332.6 704.5,336.2 705.1,339.8 705.5,343.5 705.6,347.1 705.5,350.8 705.2,354.5 704.6,358.1 703.8,361.7 702.7,365.2 701.4,368.6 699.9,372.0 698.2,375.2 696.3,378.4 694.2,381.4 691.8,384.2 689.3,386.9 686.7,389.4 683.8,391.8 680.9,393.9 677.8,395.9 674.5,397.6 671.2,399.2 667.7,400.5 664.2,401.6 660.7,402.4 657.0,403.0 653.4,403.4 649.7,403.5 646.0,403.4 642.4,403.1 638.8,402.5 635.2,401.7 631.7,400.6 628.2,399.4 624.9,397.9" fill="none" stroke="#ff1a1a" stroke-width="3.6" stroke-dasharray="12 3.3 1.6 3.3"/>
<polyline points="780.0,849.6 776.5,850.7 772.9,851.5 769.3,852.1 765.7,852.5 762.0,852.6 758.3,852.5 754.7,852.2 751.0,851.6 747.5,850.8 743.9,849.7 740.5,848.5 737.1,847.0 733.9,845.2 730.8,843.3 727.8,841.2 724.9,838.9 722.2,836.4 719.7,833.7 717.4,830.9 715.2,827.9 713.2,824.8 711.5,821.6 710.0,818.2 708.7,814.8 707.6,811.3 706.7,807.7 706.1,804.1 705.7,800.4 705.6,796.8 705.7,793.1 706.0,789.4 706.6,785.8 707.4,782.2 708.5,778.7 709.8,775.3 711.3,771.9 713.0,768.7 714.9,765.5 717.0,762.5 719.4,759.7 721.9,757.0 724.5,754.5 727.4,752.1 730.3,750.0 733.4,748.0 736.7,746.3 740.0,744.7 743.5,743.4 747.0,742.3 750.5,741.5 754.2,740.9 757.8,740.5 761.5,740.4 765.2,740.5 768.8,740.8 772.4,741.4 776.0,742.2 779.5,743.3 783.0,744.5 786.3,746.0" fill="none" stroke="#ff1a1a" stroke-width="3.6" stroke-dasharray="12 3.3 1.6 3.3"/>
<polyline points="631.2,294.3 649.5,347.4 624.9,397.9" fill="none" stroke="#ff1a1a" stroke-width="3.6" stroke-dasharray="16 3 1.5 3"/>
<polygon points="631.2,294.3 692.0,273.4 693.0,273.0 693.9,272.6 694.9,272.1 695.8,271.6 696.7,271.0 697.6,270.4 698.4,269.7 699.2,269.0 699.9,268.3 700.6,267.5 701.3,266.7 701.9,265.9 702.5,265.0 703.1,264.1 703.6,263.1 704.0,262.2 704.4,261.2 704.7,260.2 705.0,259.2 705.2,258.1 705.4,257.1 705.5,256.0 705.6,255.0 705.6,253.9 705.6,252.9 705.4,251.8 705.3,250.8 705.1,249.7 704.8,248.7 704.5,247.7 704.1,246.7 703.7,245.7 703.2,244.8 702.7,243.9 702.1,243.0 701.5,242.1 700.9,241.3 700.2,240.5 699.4,239.7 698.6,239.0 697.8,238.3 697.0,237.7 696.1,237.1 695.2,236.6 694.2,236.1 693.3,235.7 692.3,235.3 691.3,234.9 690.3,234.7 689.2,234.4 688.2,234.3 687.1,234.1 686.1,234.1 685.0,234.1 684.0,234.1 682.9,234.2 681.9,234.4 680.8,234.6 679.8,234.8 678.8,235.2 608.0,259.6 602.1,261.8 596.4,264.2 590.9,267.0 585.4,270.1 580.2,273.5 575.1,277.2 570.3,281.1 565.7,285.3 561.3,289.7 557.1,294.3 553.2,299.2 549.5,304.2 546.2,309.5 543.1,314.9 540.3,320.5 537.8,326.2 535.6,332.0 533.7,338.0 532.2,344.0 531.0,350.1 530.1,356.3 529.5,362.5 529.3,368.7 529.4,375.0 529.8,381.2 530.6,387.4 531.7,393.5 533.1,399.6 534.8,405.6 536.9,411.5 539.3,417.2 541.9,422.9 544.9,428.3 705.6,706.7 786.3,746.0 788.9,747.4 791.5,748.9 793.9,750.5 796.3,752.3 798.6,754.1 800.7,756.1 802.8,758.2 804.7,760.4 806.6,762.7 808.3,765.1 809.9,767.6 811.3,770.1 812.6,772.8 813.8,775.5 814.8,778.2 815.7,781.0 816.4,783.9 817.0,786.7 817.5,789.6 817.7,792.6 817.9,795.5 817.8,798.4 817.7,801.4 817.3,804.3 816.8,807.2 816.2,810.1 815.4,812.9 814.5,815.7 813.4,818.4 812.2,821.1 810.8,823.7 809.4,826.2 807.7,828.7 806.0,831.1 804.1,833.3 802.1,835.5 800.0,837.5 797.8,839.5 795.5,841.3 793.1,843.0 790.7,844.6 788.1,846.1 785.5,847.4 782.8,848.5 780.0,849.6 719.2,870.5 718.2,870.9 717.3,871.3 716.3,871.8 715.4,872.3 714.5,872.9 713.6,873.5 712.8,874.2 712.0,874.9 711.3,875.6 710.6,876.4 709.9,877.2 709.3,878.0 708.7,878.9 708.1,879.8 707.6,880.8 707.2,881.7 706.8,882.7 706.5,883.7 706.2,884.7 706.0,885.8 705.8,886.8 705.7,887.9 705.6,888.9 705.6,890.0 705.6,891.0 705.8,892.1 705.9,893.1 706.1,894.2 706.4,895.2 706.7,896.2 707.1,897.2 707.5,898.2 708.0,899.1 708.5,900.0 709.1,900.9 709.7,901.8 710.3,902.6 711.0,903.4 711.8,904.2 712.6,904.9 713.4,905.6 714.2,906.2 715.1,906.8 716.0,907.3 717.0,907.8 717.9,908.2 718.9,908.6 719.9,909.0 720.9,909.2 722.0,909.5 723.0,909.6 724.1,909.8 725.1,909.8 726.2,909.8 727.2,909.8 728.3,909.7 729.3,909.5 730.4,909.3 731.4,909.1 732.4,908.7 803.2,884.3 809.1,882.1 814.8,879.7 820.3,876.9 825.8,873.8 831.0,870.4 836.1,866.7 840.9,862.8 845.5,858.6 849.9,854.2 854.1,849.6 858.0,844.7 861.7,839.7 865.0,834.4 868.1,829.0 870.9,823.4 873.4,817.7 875.6,811.9 877.5,805.9 879.0,799.9 880.2,793.8 881.1,787.6 881.7,781.4 881.9,775.2 881.8,768.9 881.4,762.7 880.6,756.5 879.5,750.4 878.1,744.3 876.4,738.3 874.3,732.4 871.9,726.7 869.3,721.0 866.3,715.6 705.6,437.2 624.9,397.9 622.3,396.5 619.7,395.0 617.3,393.4 614.9,391.6 612.6,389.8 610.5,387.8 608.4,385.7 606.5,383.5 604.6,381.2 602.9,378.8 601.3,376.3 599.9,373.8 598.6,371.1 597.4,368.4 596.4,365.7 595.5,362.9 594.8,360.0 594.2,357.2 593.7,354.3 593.5,351.3 593.3,348.4 593.4,345.5 593.5,342.5 593.9,339.6 594.4,336.7 595.0,333.8 595.8,331.0 596.7,328.2 597.8,325.5 599.0,322.8 600.4,320.2 601.8,317.7 603.5,315.2 605.2,312.8 607.1,310.6 609.1,308.4 611.2,306.4 613.4,304.4 615.7,302.6 618.1,300.9 620.5,299.3 623.1,297.8 625.7,296.5 628.4,295.4 631.2,294.3" fill="none" stroke="#ffffff" stroke-width="4.9" stroke-linejoin="round"/>
<polygon points="757.5,572.0 731.5,527.0 679.7,527.0 653.7,572.0 679.7,616.9 731.5,616.9" fill="none" stroke="#ffffff" stroke-width="4.9" stroke-linejoin="round"/>
<g><line x1="467.0" y1="347.4" x2="649.5" y2="347.4" stroke="#00ff00" stroke-width="1" /><line x1="467.0" y1="796.5" x2="603.0" y2="796.5" stroke="#00ff00" stroke-width="1" /><line x1="468.5" y1="347.4" x2="468.5" y2="796.5" stroke="#00ff00" stroke-width="1" /><polygon points="468.5,348.5 470.8,362.5 466.2,362.5" fill="#00ff00"/><polygon points="468.5,795.5 466.2,781.5 470.8,781.5" fill="#00ff00"/><line x1="441.8" y1="305.4" x2="505.2" y2="305.4" stroke="#00ff00" stroke-width="1" /><line x1="505.2" y1="305.4" x2="646.0" y2="370.0" stroke="#00ff00" stroke-width="1" /><polygon points="539.0,320.9 525.3,317.2 527.2,313.0" fill="#00ff00"/><line x1="600.0" y1="199.4" x2="679.7" y2="199.4" stroke="#00ff00" stroke-width="1" /><line x1="679.7" y1="199.4" x2="692.6" y2="310.6" stroke="#00ff00" stroke-width="1" /><polygon points="683.2,232.5 679.4,218.8 684.0,218.3" fill="#00ff00"/><polygon points="688.6,277.0 692.5,290.6 688.0,291.2" fill="#00ff00"/><line x1="678.8" y1="235.2" x2="739.0" y2="214.3" stroke="#00ff00" stroke-width="1" /><line x1="692.0" y1="273.4" x2="752.0" y2="253.7" stroke="#00ff00" stroke-width="1" /><line x1="725.0" y1="182.1" x2="737.3" y2="214.5" stroke="#00ff00" stroke-width="1" /><polygon points="737.3,214.5 730.2,202.2 734.5,200.6" fill="#00ff00"/><line x1="762.0" y1="289.1" x2="750.6" y2="255.6" stroke="#00ff00" stroke-width="1" /><polygon points="750.6,255.6 757.3,268.1 752.9,269.6" fill="#00ff00"/><polyline points="626.5,280.7 623.9,281.6 621.3,282.7 618.8,283.8 616.3,285.1 613.9,286.4 611.5,287.9 609.2,289.4 607.0,291.0 604.8,292.7 602.7,294.5 600.6,296.4 598.7,298.4 596.8,300.4 595.0,302.5 593.3,304.7 591.6,306.9 590.1,309.2 588.6,311.6 587.3,314.0 586.0,316.5 584.8,319.0 583.8,321.5 582.8,324.1 581.9,326.8 581.2,329.4 580.5,332.1 580.0,334.9 579.5,337.6 579.2,340.3 579.0,343.1 578.9,345.9 578.9,348.6 579.0,351.4 579.2,354.2 579.5,356.9 579.9,359.7 580.5,362.4 581.1,365.1 581.9,367.8 582.7,370.4 583.7,373.0 584.7,375.6 585.9,378.1 587.1,380.6 588.5,383.0 589.9,385.3 591.5,387.7 593.1,389.9 594.8,392.1 596.6,394.2 598.5,396.2 600.4,398.2 602.5,400.1 604.6,401.9 606.7,403.6 609.0,405.2 611.3,406.8 613.6,408.2 616.1,409.6 618.5,410.9" fill="none" stroke="#00ff00" stroke-width="1"/><line x1="631.2" y1="294.3" x2="625.5" y2="277.8" stroke="#00ff00" stroke-width="1" /><line x1="624.9" y1="397.9" x2="617.2" y2="413.6" stroke="#00ff00" stroke-width="1" /><polygon points="626.5,280.7 614.7,288.6 612.8,284.4" fill="#00ff00"/><polygon points="618.5,410.9 605.4,405.5 607.8,401.6" fill="#00ff00"/><line x1="583.0" y1="284.0" x2="728.4" y2="423.1" stroke="#00ff00" stroke-width="1" /><line x1="728.4" y1="423.1" x2="840.9" y2="423.1" stroke="#00ff00" stroke-width="1" /><polygon points="594.7,297.6 606.5,305.5 603.3,308.8" fill="#00ff00"/><polygon points="704.1,399.7 692.4,391.7 695.6,388.4" fill="#00ff00"/><line x1="759.7" y1="575.8" x2="792.3" y2="632.3" stroke="#00ff00" stroke-width="1" /><line x1="681.9" y1="620.8" x2="714.5" y2="677.2" stroke="#00ff00" stroke-width="1" /><line x1="712.3" y1="673.4" x2="790.1" y2="628.4" stroke="#00ff00" stroke-width="1" /><polygon points="712.3,673.4 723.3,664.4 725.6,668.4" fill="#00ff00"/><polygon points="790.1,628.4 779.1,637.4 776.8,633.5" fill="#00ff00"/><line x1="824.5" y1="643.2" x2="835.8" y2="662.7" stroke="#00ff00" stroke-width="1" /><line x1="707.8" y1="710.6" x2="719.1" y2="730.1" stroke="#00ff00" stroke-width="1" /><line x1="716.9" y1="726.2" x2="833.6" y2="658.8" stroke="#00ff00" stroke-width="1" /><polygon points="716.9,726.2 727.8,717.2 730.1,721.2" fill="#00ff00"/><polygon points="833.6,658.8 822.6,667.8 820.3,663.8" fill="#00ff00"/></g>
<rect x="63.5" y="892.5" width="8" height="8" fill="none" stroke="#ffffff" stroke-width="1"/><line x1="67.5" y1="892.5" x2="67.5" y2="857.5" stroke="#ffffff" stroke-width="1" /><polygon points="67.5,846.5 63.5,857.5 71.5,857.5" fill="none" stroke="#ffffff" stroke-width="1"/><line x1="67.5" y1="848.0" x2="67.5" y2="857.5" stroke="#ffffff" stroke-width="1" /><line x1="71.5" y1="896.5" x2="106.5" y2="896.5" stroke="#ffffff" stroke-width="1" /><polygon points="118,896.5 106.5,892.5 106.5,900.5" fill="none" stroke="#ffffff" stroke-width="1"/><line x1="107.0" y1="896.5" x2="116.0" y2="896.5" stroke="#ffffff" stroke-width="1" /><polyline points="63,828 67.6,832.3 73,828" fill="none" stroke="#ffffff" stroke-width="1"/><line x1="67.6" y1="832.3" x2="67.6" y2="839.0" stroke="#ffffff" stroke-width="1" /><line x1="127.2" y1="891.0" x2="136.0" y2="900.7" stroke="#ffffff" stroke-width="1" /><line x1="136.0" y1="891.0" x2="127.2" y2="900.7" stroke="#ffffff" stroke-width="1" />
<rect x="1124.5" y="883.5" width="155" height="8" fill="none" stroke="#7f7f7f" stroke-width="1"/><rect x="1146" y="883.5" width="44" height="4" fill="#7f7f7f"/><rect x="1124.5" y="887.5" width="21.5" height="4.5" fill="#7f7f7f"/><rect x="1190" y="887.5" width="89.5" height="4.5" fill="#7f7f7f"/><text x="1146.5" y="880" font-family="Liberation Sans" font-size="11" fill="#8a8a8a" text-anchor="middle">10</text><text x="1278" y="880" font-family="Liberation Sans" font-size="11" fill="#8a8a8a" text-anchor="middle">70</text><text x="1124" y="902" font-family="Liberation Sans" font-size="11" fill="#8a8a8a" text-anchor="middle">0</text><text x="1190" y="902" font-family="Liberation Sans" font-size="11" fill="#8a8a8a" text-anchor="middle">30</text>
<line x1="1098.0" y1="919.5" x2="1309.0" y2="919.5" stroke="#ffffff" stroke-width="1" />
<line x1="1308.5" y1="709.0" x2="1308.5" y2="920.0" stroke="#ffffff" stroke-width="1" />
<rect x="1287.5" y="898.5" width="21" height="21" fill="none" stroke="#ffffff" stroke-width="1"/>
</g></svg>
<svg width="1397" height="1021" style="position:absolute;left:0;top:0"><path d="M8.5,21 Q16,21 23.8,18.3 Q23.5,22 21.5,22.8 H9.5 Z" fill="#1f7f6f"/><path d="M11,17.6 L13,9.2 H15.5 L16.5,13 L17.5,9.2 H19.7 L21,17.6 H18.5 L17.5,13.5 L16,17.6 H15 L13.8,13.8 L13.2,17.6 Z" fill="#249a85"/><rect x="1280" y="14" width="10" height="1" fill="#111"/><rect x="1324.5" y="10.5" width="9" height="9" fill="none" stroke="#111" stroke-width="1"/><path d="M1369,10 L1379,20 M1379,10 L1369,20" stroke="#111" stroke-width="1.1"/><rect x="6" y="37" width="2" height="2" fill="#b0b0b0"/><rect x="6" y="41" width="2" height="2" fill="#b0b0b0"/><rect x="6" y="45" width="2" height="2" fill="#b0b0b0"/><rect x="6" y="49" width="2" height="2" fill="#b0b0b0"/><path d="M9.5,81 L28,63 H103 L85,81" fill="#ececec" stroke="#9a9a9a" stroke-width="1"/><path d="M88,81 L104,63 H157 V81" fill="#ffffff" stroke="#9a9a9a" stroke-width="1"/><path d="M1362.5,65 L1358.5,68.5 L1362.5,72 Z" fill="none" stroke="#222" stroke-width="1"/><path d="M1372.5,65 L1376.5,68.5 L1372.5,72 Z" fill="none" stroke="#222" stroke-width="1"/><path d="M1384.5,65 L1391.5,72 M1391.5,65 L1384.5,72" stroke="#111" stroke-width="1.6"/><polygon points="52,930.2 57.2,925.5 57.2,935" fill="#6e6e6e"/><polygon points="71.2,930.2 66,925.5 66,935" fill="#6e6e6e"/><path d="M77,922 L84.5,938.5 H117 L124,922" fill="#ffffff" stroke="#222" stroke-width="1"/><rect x="1365" y="945" width="32" height="33" fill="#ffffff"/><path d="M1381,956 L1385,952 L1389,956" fill="none" stroke="#444" stroke-width="1.6"/><path d="M1381,966 L1385,970 L1389,966" fill="none" stroke="#444" stroke-width="1.6"/><rect x="1308" y="979" width="70" height="19" fill="#f0f0f0"/><rect x="1323" y="981" width="17" height="15" fill="#cdcdcd"/><path d="M1318,984.5 L1314,988.5 L1318,992.5" fill="none" stroke="#333" stroke-width="1.7"/><path d="M1367,984.5 L1371,988.5 L1367,992.5" fill="none" stroke="#333" stroke-width="1.7"/><rect x="970.5" y="1002.5" width="57" height="17" fill="#dcecfc" stroke="#3d8ed8" stroke-width="1"/><rect x="1090.5" y="1002.5" width="35" height="17" fill="#dcecfc" stroke="#3d8ed8" stroke-width="1"/><rect x="1127.5" y="1002.5" width="34" height="17" fill="#dcecfc" stroke="#3d8ed8" stroke-width="1"/><rect x="1322" y="1001" width="75" height="20" fill="#f8f8f8"/><polygon points="1326.6,1017.6 1329.5,1004 1335,1004 1333.5,1017.6" fill="#17a58c"/><polygon points="1334.5,1017.6 1335.8,1004 1339.5,1004 1343,1017.6" fill="#17a58c"/><line x1="1328" y1="1017" x2="1340" y2="1007" stroke="#d8fff8" stroke-width="1.1"/></svg><div class="t" style="left:1366px;top:940px;font-size:16px;line-height:18px;color:#c8c8c8;font-style:italic"><span class="c">激</span><span class="c">活</span></div><div class="t" style="left:1366px;top:962px;font-size:16px;line-height:18px;color:#c8c8c8"><span class="c">转</span><span class="c">到</span></div><div class="t" style="left:30px;top:64px;font-size:12.5px">MxCAD<span class="c">云</span><span class="c">图</span></div><div class="t" style="left:109px;top:64px;font-size:12.5px;font-weight:bold">3.mxg*</div><div class="t" style="left:89px;top:923px;font-size:12px"><span class="c">模</span><span class="c">型</span></div><div class="t" style="left:864px;top:1004px;font-size:12px"><span class="c">栅</span><span class="c">格</span></div><div class="t" style="left:900px;top:1004px;font-size:12px"><span class="c">正</span><span class="c">交</span></div><div class="t" style="left:936.5px;top:1004px;font-size:12px"><span class="c">极</span><span class="c">轴</span></div><div class="t" style="left:973px;top:1004px;font-size:12px"><span class="c">对</span><span class="c">象</span><span class="c">捕</span><span class="c">捉</span></div><div class="t" style="left:1031.5px;top:1004px;font-size:12px"><span class="c">对</span><span class="c">象</span><span class="c">追</span><span class="c">踪</span></div><div class="t" style="left:1093px;top:1004px;font-size:12px">DYN</div><div class="t" style="left:1130px;top:1004px;font-size:12px"><span class="c">线</span><span class="c">宽</span></div><div class="t" style="left:1166px;top:1004px;font-size:12px;color:#2a2ad0"><span class="c">提</span><span class="c">交</span><span class="c">软</span><span class="c">件</span><span class="c">问</span><span class="c">题</span><span class="c">或</span><span class="c">增</span><span class="c">加</span><span class="c">新</span><span class="c">功</span><span class="c">能</span></div><div class="t" style="left:1346px;top:1004px;font-size:12.3px;color:#1d2040">MxCAD</div>
</body></html>
